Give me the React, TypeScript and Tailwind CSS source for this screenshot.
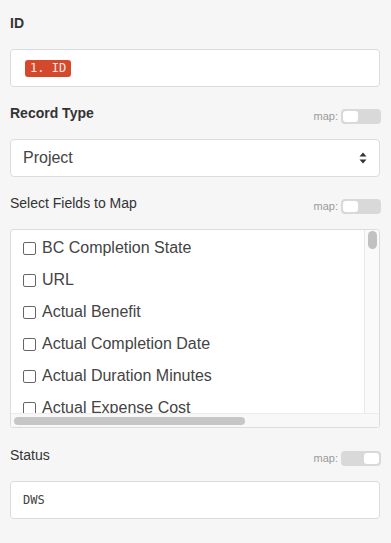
const fields = [
  "BC Completion State",
  "URL",
  "Actual Benefit",
  "Actual Completion Date",
  "Actual Duration Minutes",
  "Actual Expense Cost",
];

function MapToggle({ on }: { on?: boolean }) {
  return (
    <div className="flex items-center gap-[3px] mt-[6px]">
      <span className="text-[11px] leading-none text-[#9a9a9a]">map:</span>
      <div
        className={`w-[40px] h-[15px] rounded-[4px] bg-[#d9d9d9] flex items-center px-[2px] ${
          on ? "justify-end" : "justify-start"
        }`}
      >
        <div className="w-[15px] h-[11px] rounded-[3px] bg-white" />
      </div>
    </div>
  );
}

function Label({ text, bold, on, toggle }: { text: string; bold?: boolean; on?: boolean; toggle?: boolean }) {
  return (
    <div className="flex justify-between items-start h-[20px]">
      <span className={`text-[14px] leading-[20px] text-[#333] ${bold ? "font-bold" : ""}`}>{text}</span>
      {toggle && <MapToggle on={on} />}
    </div>
  );
}

export default function App() {
  return (
    <div
      className="w-[391px] h-[543px] overflow-hidden bg-[#f6f6f6] px-[10px] pt-[13px] flex flex-col"
      style={{ fontFamily: '"Liberation Sans", Arial, sans-serif' }}
    >
      <Label text="ID" bold />
      <div className="mt-[16px] h-[38px] w-[370px] rounded-[4px] border border-[#dcdcdc] bg-white flex items-center px-[14px]">
        <span className="bg-[#d4492b] rounded-[3px] h-[17px] px-[5px] flex items-center text-[12px] text-[#fbe9e5] font-['DejaVu_Sans_Mono',monospace]">
          1. ID
        </span>
      </div>

      <div className="mt-[16px]">
        <Label text="Record Type" bold toggle />
      </div>
      <div className="mt-[16px] h-[38px] w-[370px] rounded-[4px] border border-[#dcdcdc] bg-white flex items-center justify-between pl-[12px] pr-[12px]">
        <span className="text-[16px] text-[#444]">Project</span>
        <svg width="8" height="12" viewBox="0 0 8 12">
          <path d="M4 0.5 L7.5 4.5 L0.5 4.5 Z" fill="#333" />
          <path d="M4 11.5 L7.5 7.5 L0.5 7.5 Z" fill="#333" />
        </svg>
      </div>

      <div className="mt-[16px]">
        <Label text="Select Fields to Map" toggle />
      </div>
      <div className="mt-[16px] h-[199px] w-[370px] rounded-[3px] border border-[#dcdcdc] bg-white flex flex-col overflow-hidden">
        <div className="flex h-[183px]">
          <div className="flex-1 overflow-hidden pt-[2px] border-r border-[#e8e8e8]">
            {fields.map((f) => (
              <div key={f} className="h-[32px] flex items-center pl-[12px] gap-[6px] whitespace-nowrap">
                <span className="w-[13px] h-[13px] rounded-[2px] border border-[#666] bg-white shrink-0" />
                <span className="text-[16px] text-[#444]">{f}</span>
              </div>
            ))}
          </div>
          <div className="w-[14px] bg-[#fafafa] flex justify-center pt-[1px]">
            <div className="w-[9px] h-[18px] rounded-full bg-[#c1c1c1]" />
          </div>
        </div>
        <div className="h-[15px] flex items-center pl-[3px] border-t border-[#ececec] bg-[#f8f8f8]">
          <div className="w-[231px] h-[8px] rounded-full bg-[#c6c6c6]" />
        </div>
      </div>

      <div className="mt-[17px]">
        <Label text="Status" on toggle />
      </div>
      <div className="mt-[16px] h-[38px] w-[370px] rounded-[4px] border border-[#dcdcdc] bg-white flex items-center px-[12px]">
        <span className="text-[12px] text-[#444] font-['DejaVu_Sans_Mono',monospace]">DWS</span>
      </div>
    </div>
  );
}
